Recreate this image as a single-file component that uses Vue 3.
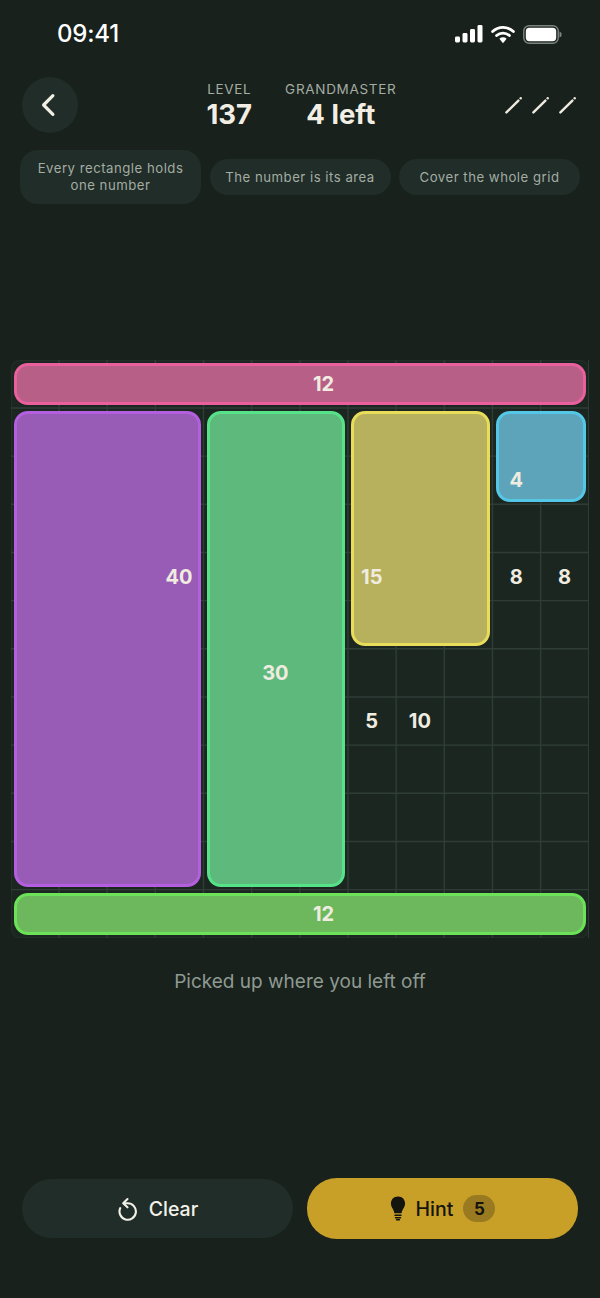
<script setup>
const step = 578 / 12
const inner = Array.from({ length: 12 }, (_, i) => (i + 1) * step - 0.2)
const pieces = [
  { id: 'pink', col: 1, row: 1, w: 12, h: 1 },
  { id: 'purple', col: 1, row: 2, w: 4, h: 10 },
  { id: 'mint', col: 5, row: 2, w: 3, h: 10 },
  { id: 'yellow', col: 8, row: 2, w: 3, h: 5 },
  { id: 'blue', col: 11, row: 2, w: 2, h: 2 },
  { id: 'lime', col: 1, row: 12, w: 12, h: 1 },
]
const clues = [
  { n: 12, col: 7, row: 1 },
  { n: 4, col: 11, row: 3 },
  { n: 40, col: 4, row: 5 },
  { n: 15, col: 8, row: 5 },
  { n: 8, col: 11, row: 5 },
  { n: 8, col: 12, row: 5 },
  { n: 30, col: 6, row: 7 },
  { n: 5, col: 8, row: 8 },
  { n: 10, col: 9, row: 8 },
  { n: 12, col: 7, row: 12 },
]
const pos = (o) => ({
  gridColumn: `${o.col} / span ${o.w || 1}`,
  gridRow: `${o.row} / span ${o.h || 1}`,
})
</script>

<template>
  <div class="screen">
    <div class="status">
      <span class="time">09:41</span>
      <div class="status-icons">
        <svg width="28" height="18" viewBox="0 0 28 18">
          <rect x="0" y="11.5" width="5" height="6" rx="1.4" fill="#fff" />
          <rect x="7.5" y="8" width="5" height="9.5" rx="1.4" fill="#fff" />
          <rect x="15" y="4" width="5" height="13.5" rx="1.4" fill="#fff" />
          <rect x="22.5" y="0" width="5" height="17.5" rx="1.4" fill="#fff" />
        </svg>
        <svg width="24" height="19" viewBox="0 0 24 19">
          <path d="M1.6 6.6 A15 15 0 0 1 22.4 6.6" fill="none" stroke="#fff" stroke-width="2.8" stroke-linecap="round" />
          <path d="M5.6 10.6 A9.3 9.3 0 0 1 18.4 10.6" fill="none" stroke="#fff" stroke-width="2.8" stroke-linecap="round" />
          <path d="M8.4 13.8 A5.2 5.2 0 0 1 15.6 13.8 L12 18.2 Z" fill="#fff" />
        </svg>
        <svg width="39" height="19" viewBox="0 0 39 19">
          <rect x="0.75" y="0.75" width="34.5" height="17.5" rx="5.5" fill="none" stroke="#7c8480" stroke-width="1.4" />
          <rect x="2.8" y="2.8" width="30.4" height="13.4" rx="3.6" fill="#fff" />
          <path d="M36.5 6.5 C38 7 38.6 8 38.6 9.5 C38.6 11 38 12 36.5 12.5 Z" fill="#7c8480" />
        </svg>
      </div>
    </div>

    <header class="top">
      <button class="back" aria-label="Back">
        <svg class="chevron" width="16" height="24" viewBox="0 0 16 24">
          <path d="M11.9 2.6 L2.6 12 L11.9 21.4" fill="none" stroke="#f1eee4" stroke-width="3.2" stroke-linecap="round" stroke-linejoin="round" />
        </svg>
      </button>
      <div class="stats">
        <div class="stat">
          <span class="label">LEVEL</span>
          <span class="value">137</span>
        </div>
        <div class="stat">
          <span class="label">GRANDMASTER</span>
          <span class="value">4 left</span>
        </div>
      </div>
      <div class="pencils">
        <svg v-for="i in 3" :key="i" width="18" height="18" viewBox="0 0 18 18">
          <path d="M1.4 16.4 L13.4 4.6" fill="none" stroke="#efeadf" stroke-width="2.4" stroke-linecap="round" />
          <circle cx="15.7" cy="2.2" r="1.2" fill="#efeadf" />
        </svg>
      </div>
    </header>

    <div class="chips">
      <div class="chip">Every rectangle holds one number</div>
      <div class="chip">The number is its area</div>
      <div class="chip">Cover the whole grid</div>
    </div>

    <div class="board">
      <svg class="lines" width="578" height="578" viewBox="0 0 578 578">
        <rect x="0.6" y="0.6" width="576.8" height="576.8" rx="8" fill="none" stroke="#232e28" stroke-width="1.2" />
        <template v-for="(p, i) in inner" :key="i">
          <line :x1="p" y1="0" :x2="p" y2="578" />
          <line v-if="i < 11" x1="0" :y1="p" x2="578" :y2="p" />
        </template>
      </svg>
      <div class="layer">
        <div v-for="p in pieces" :key="p.id" class="piece" :class="p.id" :style="pos(p)"></div>
      </div>
      <div class="layer">
        <div v-for="(c, i) in clues" :key="i" class="clue" :style="pos(c)">{{ c.n }}</div>
      </div>
    </div>

    <p class="caption">Picked up where you left off</p>

    <div class="actions">
      <button class="btn clear">
        <svg width="22" height="24" viewBox="0 0 22 24">
          <path d="M7 6.3 H10.7 A8.2 8.2 0 1 1 3.2 11.2" fill="none" stroke="#f4f1e8" stroke-width="2.1" stroke-linecap="round" stroke-linejoin="round" />
          <path d="M10.5 2 L6.2 6.2 L10.5 10.3" fill="none" stroke="#f4f1e8" stroke-width="2.1" stroke-linecap="round" stroke-linejoin="round" />
        </svg>
        <span>Clear</span>
      </button>
      <button class="btn hint">
        <svg width="16" height="25" viewBox="0 0 16 25">
          <path d="M8 0.5 C3.5 0.5 0.9 3.8 0.9 7.6 C0.9 11.4 3.8 13.2 4.4 17.2 L11.6 17.2 C12.2 13.2 15.1 11.4 15.1 7.6 C15.1 3.8 12.5 0.5 8 0.5 Z" fill="#14140f" />
          <rect x="4.4" y="18.5" width="7.2" height="1.6" rx="0.6" fill="#14140f" />
          <rect x="4.8" y="21" width="6.4" height="1.4" rx="0.6" fill="#14140f" />
          <rect x="5.9" y="23" width="4.2" height="1.4" rx="0.6" fill="#14140f" />
        </svg>
        <span>Hint</span>
        <span class="badge">5</span>
      </button>
    </div>
  </div>
</template>

<style>
html, body {
  margin: 0;
  background: #18211c;
}
</style>

<style scoped>
.screen {
  width: 600px;
  height: 1298px;
  background: #18211c;
  font-family: Inter, "Liberation Sans", sans-serif;
  display: flex;
  flex-direction: column;
  overflow: hidden;
}

.status {
  height: 68px;
  padding: 21px 38px 0 57px;
  box-sizing: border-box;
  display: flex;
  justify-content: space-between;
  align-items: flex-start;
}
.time {
  color: #fff;
  font-size: 24px;
  font-weight: 500;
  line-height: 26px;
  letter-spacing: -0.2px;
}
.status-icons {
  display: flex;
  align-items: center;
  gap: 8px;
  height: 26px;
}

.top {
  height: 74px;
  padding: 9px 22px 0;
  box-sizing: border-box;
  display: flex;
  justify-content: space-between;
  align-items: flex-start;
}
.back {
  width: 56px;
  height: 56px;
  border: 0;
  border-radius: 50%;
  background: #202d28;
  padding: 0;
  display: flex;
  align-items: center;
  justify-content: center;
}
.chevron {
  margin-right: 3px;
}
.stats {
  display: flex;
  gap: 33px;
  margin: 4px 0 0 20px;
}
.stat {
  display: flex;
  flex-direction: column;
  align-items: center;
}
.label {
  color: #a4aca3;
  font-size: 13.5px;
  font-weight: 400;
  line-height: 17px;
  letter-spacing: 0.7px;
}
.value {
  color: #f2eee3;
  font-size: 27.5px;
  font-weight: 700;
  line-height: 32px;
}
.pencils {
  display: flex;
  gap: 9px;
  margin-top: 19px;
  margin-right: 1px;
}

.chips {
  display: flex;
  align-items: center;
  gap: 8.5px;
  padding: 0 20px;
  height: 54px;
  margin-top: 8px;
}
.chip {
  flex: 1 1 0;
  box-sizing: border-box;
  padding: 10px 12px;
  border-radius: 18px;
  background: #202d28;
  color: #a4aca3;
  font-size: 13.2px;
  line-height: 16.7px;
  letter-spacing: 0.5px;
  text-align: center;
  min-width: 0;
}

.board {
  position: relative;
  width: 578px;
  height: 578px;
  margin: 156px 11px 0;
  background: #1b2620;
  border-radius: 8px;
}
.lines {
  position: absolute;
  inset: 0;
  stroke: #303d37;
  stroke-width: 1.4;
}
.layer {
  position: absolute;
  inset: 0;
  display: grid;
  grid-template-columns: repeat(12, 1fr);
  grid-template-rows: repeat(12, 1fr);
}
.piece {
  margin: 3px;
  border: 3px solid;
  border-radius: 14px;
  box-sizing: border-box;
}
.pink { background: #b85f88; border-color: #e9609d; }
.purple { background: #995cb6; border-color: #b45fe0; }
.mint { background: #5db97c; border-color: #55e288; }
.yellow { background: #b7b05c; border-color: #e8dc5b; }
.blue { background: #5da4bb; border-color: #54c6e6; }
.lime { background: #6db85c; border-color: #6be258; }

.clue {
  display: flex;
  align-items: center;
  justify-content: center;
  color: #f0ece0;
  font-size: 20px;
  font-weight: 700;
  padding-right: 1px;
}

.caption {
  margin: 31px 0 0;
  text-align: center;
  color: #8f9a92;
  font-size: 19px;
  line-height: 26px;
}

.actions {
  margin-top: auto;
  padding: 0 22px 59px;
  display: flex;
  gap: 14px;
  align-items: center;
}
.btn {
  flex: 1 1 0;
  border: 0;
  border-radius: 30px;
  font-family: inherit;
  font-size: 19.5px;
  font-weight: 500;
  display: flex;
  align-items: center;
  justify-content: center;
  padding: 0;
}
.clear {
  height: 59px;
  background: #202d28;
  color: #f4f1e8;
  gap: 10px;
}
.hint {
  height: 61px;
  background: #c8a028;
  color: #14140f;
  gap: 10px;
}
.badge {
  width: 32px;
  height: 27px;
  border-radius: 14px;
  background: #9a7a20;
  display: flex;
  align-items: center;
  justify-content: center;
  font-size: 17px;
  font-weight: 700;
  color: #14140f;
}
</style>
